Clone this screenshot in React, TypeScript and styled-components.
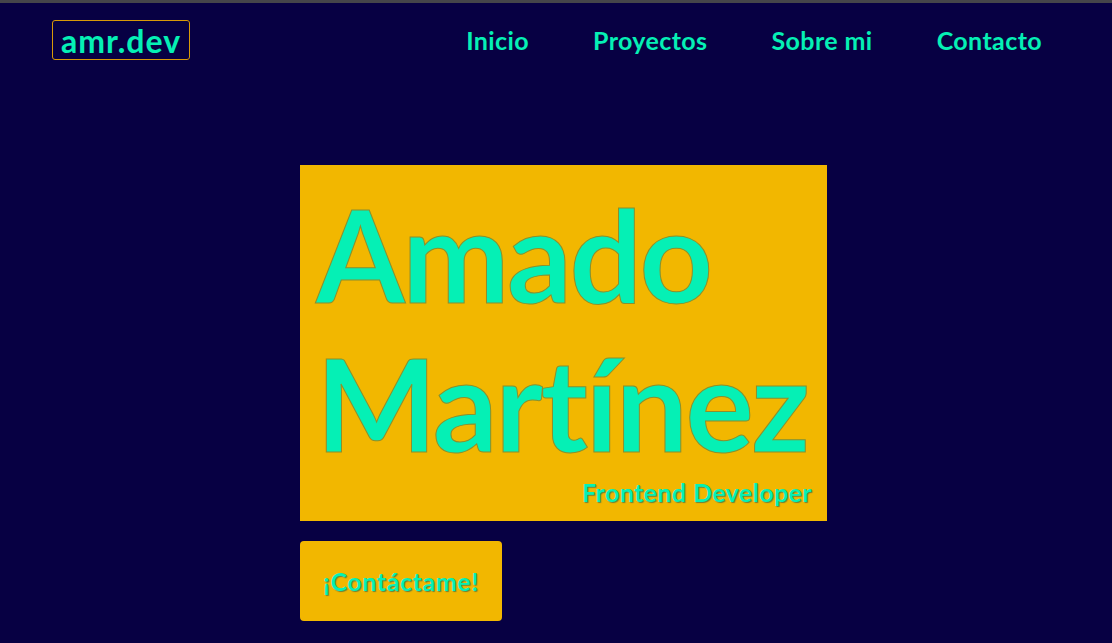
import styled, { createGlobalStyle } from "styled-components";

const GlobalStyle = createGlobalStyle`
  * {
    box-sizing: border-box;
  }
  body {
    margin: 0;
    background: #070043;
    border-top: 3px solid #45454a;
    font-family: "Lato", "Noto Sans", sans-serif;
    min-height: 643px;
  }
`;

const Page = styled.div`
  display: flex;
  flex-direction: column;
`;

const Header = styled.header`
  display: flex;
  align-items: center;
  justify-content: space-between;
  padding: 17px 70px 0 52px;
  height: 57px;
`;

const Logo = styled.a`
  display: flex;
  align-items: center;
  height: 40px;
  padding: 0 8px;
  border: 1px solid #d89a08;
  border-radius: 3px;
  color: #05f0b5;
  font-size: 32px;
  font-weight: 700;
  letter-spacing: 1px;
  text-decoration: none;
`;

const Nav = styled.nav`
  display: flex;
  gap: 64px;
`;

const NavLink = styled.a`
  color: #05f0b5;
  font-size: 25px;
  font-weight: 700;
  letter-spacing: 0.4px;
  text-decoration: none;
`;

const Hero = styled.main`
  display: flex;
  flex-direction: column;
  align-items: flex-start;
  gap: 20px;
  padding: 105px 0 0 300px;
`;

const NameCard = styled.section`
  display: flex;
  flex-direction: column;
  width: 527px;
  height: 356px;
  padding: 14px 15px 0 16px;
  background: #f2b700;
`;

const Name = styled.h1`
  margin: 0;
  color: #05f0b5;
  font-size: 128px;
  font-weight: 700;
  line-height: 149px;
  letter-spacing: -2.5px;
  white-space: nowrap;
  -webkit-text-stroke: 1px #8d8f2c;
`;

const Role = styled.p`
  margin: 0;
  align-self: flex-end;
  color: #05f0b5;
  font-size: 25px;
  font-weight: 700;
  letter-spacing: 0.4px;
  text-shadow: 1px 1px 1px #6d7f3a;
`;

const ContactButton = styled.button`
  width: 202px;
  height: 80px;
  border: none;
  border-radius: 4px;
  background: #f2b700;
  color: #05f0b5;
  font-family: inherit;
  font-size: 25px;
  font-weight: 700;
  letter-spacing: 0.6px;
  text-shadow: 1px 1px 1px #6d7f3a;
  cursor: pointer;
`;

export default function App() {
  return (
    <Page>
      <GlobalStyle />
      <Header>
        <Logo href="#">amr.dev</Logo>
        <Nav>
          <NavLink href="#">Inicio</NavLink>
          <NavLink href="#">Proyectos</NavLink>
          <NavLink href="#">Sobre mi</NavLink>
          <NavLink href="#">Contacto</NavLink>
        </Nav>
      </Header>
      <Hero>
        <NameCard>
          <Name>
            Amado
            <br />
            Martínez
          </Name>
          <Role>Frontend Developer</Role>
        </NameCard>
        <ContactButton>¡Contáctame!</ContactButton>
      </Hero>
    </Page>
  );
}
